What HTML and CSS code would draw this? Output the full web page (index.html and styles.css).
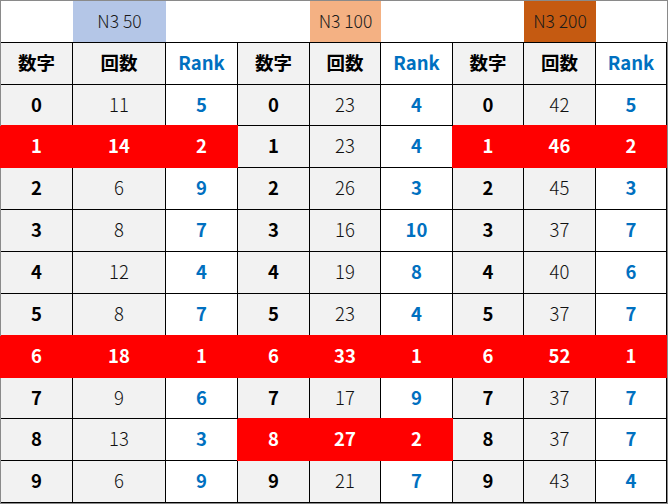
FILE: index.html
```html
<!DOCTYPE html>
<html lang="ja">
<head>
<meta charset="utf-8">
<title>N3</title>
<link rel="stylesheet" href="styles.css">
</head>
<body>
<div class="sheet">
  <div class="c top"></div><div class="c top lbl blue">N3 50</div><div class="c top"></div>
  <div class="c top"></div><div class="c top lbl peach">N3 100</div><div class="c top"></div>
  <div class="c top"></div><div class="c top lbl brown">N3 200</div><div class="c top"></div>

  <div class="c g k">数字</div><div class="c g k">回数</div><div class="c r">Rank</div>
  <div class="c g k">数字</div><div class="c g k">回数</div><div class="c r">Rank</div>
  <div class="c g k">数字</div><div class="c g k">回数</div><div class="c r">Rank</div>

  <div class="c g d">0</div><div class="c g n">11</div><div class="c r">5</div>
  <div class="c g d">0</div><div class="c g n">23</div><div class="c r">4</div>
  <div class="c g d">0</div><div class="c g n">42</div><div class="c r">5</div>

  <div class="c red">1</div><div class="c red">14</div><div class="c red">2</div>
  <div class="c g d">1</div><div class="c g n">23</div><div class="c r">4</div>
  <div class="c red">1</div><div class="c red">46</div><div class="c red">2</div>

  <div class="c g d">2</div><div class="c g n">6</div><div class="c r">9</div>
  <div class="c g d">2</div><div class="c g n">26</div><div class="c r">3</div>
  <div class="c g d">2</div><div class="c g n">45</div><div class="c r">3</div>

  <div class="c g d">3</div><div class="c g n">8</div><div class="c r">7</div>
  <div class="c g d">3</div><div class="c g n">16</div><div class="c r">10</div>
  <div class="c g d">3</div><div class="c g n">37</div><div class="c r">7</div>

  <div class="c g d">4</div><div class="c g n">12</div><div class="c r">4</div>
  <div class="c g d">4</div><div class="c g n">19</div><div class="c r">8</div>
  <div class="c g d">4</div><div class="c g n">40</div><div class="c r">6</div>

  <div class="c g d">5</div><div class="c g n">8</div><div class="c r">7</div>
  <div class="c g d">5</div><div class="c g n">23</div><div class="c r">4</div>
  <div class="c g d">5</div><div class="c g n">37</div><div class="c r">7</div>

  <div class="c red">6</div><div class="c red">18</div><div class="c red">1</div>
  <div class="c red">6</div><div class="c red">33</div><div class="c red">1</div>
  <div class="c red">6</div><div class="c red">52</div><div class="c red">1</div>

  <div class="c g d">7</div><div class="c g n">9</div><div class="c r">6</div>
  <div class="c g d">7</div><div class="c g n">17</div><div class="c r">9</div>
  <div class="c g d">7</div><div class="c g n">37</div><div class="c r">7</div>

  <div class="c g d">8</div><div class="c g n">13</div><div class="c r">3</div>
  <div class="c red">8</div><div class="c red">27</div><div class="c red">2</div>
  <div class="c g d">8</div><div class="c g n">37</div><div class="c r">7</div>

  <div class="c g d">9</div><div class="c g n">6</div><div class="c r">9</div>
  <div class="c g d">9</div><div class="c g n">21</div><div class="c r">7</div>
  <div class="c g d">9</div><div class="c g n">43</div><div class="c r">4</div>
</div>
</body>
</html>
```

FILE: styles.css
```css
html, body {
  margin: 0;
  padding: 0;
  background: #ffffff;
}

.sheet {
  display: grid;
  grid-template-columns: 72px 93px 72px 72px 71px 72px 71px 72px 71px;
  grid-template-rows: 42px 42px 41px 42px 42px 42px 42px 42px 42px 41px 42px 42px;
  width: max-content;
  border: 1px solid #8a8a8a;
  font-family: "Noto Sans CJK JP", "Noto Sans", sans-serif;
  font-size: 18.5px;
}

.c {
  box-sizing: border-box;
  display: flex;
  align-items: center;
  justify-content: center;
  padding-bottom: 2px;
  border-right: 1px solid #000;
  border-bottom: 1px solid #000;
  background: #ffffff;
  line-height: 1;
}

.top {
  border-right: none;
}

.lbl {
  font-size: 17.5px;
  color: #1a1a1a;
  font-weight: 300;
}

.blue { background: #b4c6e7; }
.peach { background: #f4b183; }
.brown { background: #c55a11; }

.g { background: #f2f2f2; }

.k {
  font-weight: 700;
  color: #000;
}

.d {
  font-weight: 700;
  color: #000;
}

.n {
  font-weight: 300;
  color: #111111;
}

.r {
  font-weight: 700;
  color: #0070c0;
}

.red {
  background: #ff0000;
  border-color: #ff0000;
  color: #ffffff;
  font-weight: 700;
  box-shadow: 0 -1px 0 #ff0000, -1px 0 0 #ff0000;
}
```
